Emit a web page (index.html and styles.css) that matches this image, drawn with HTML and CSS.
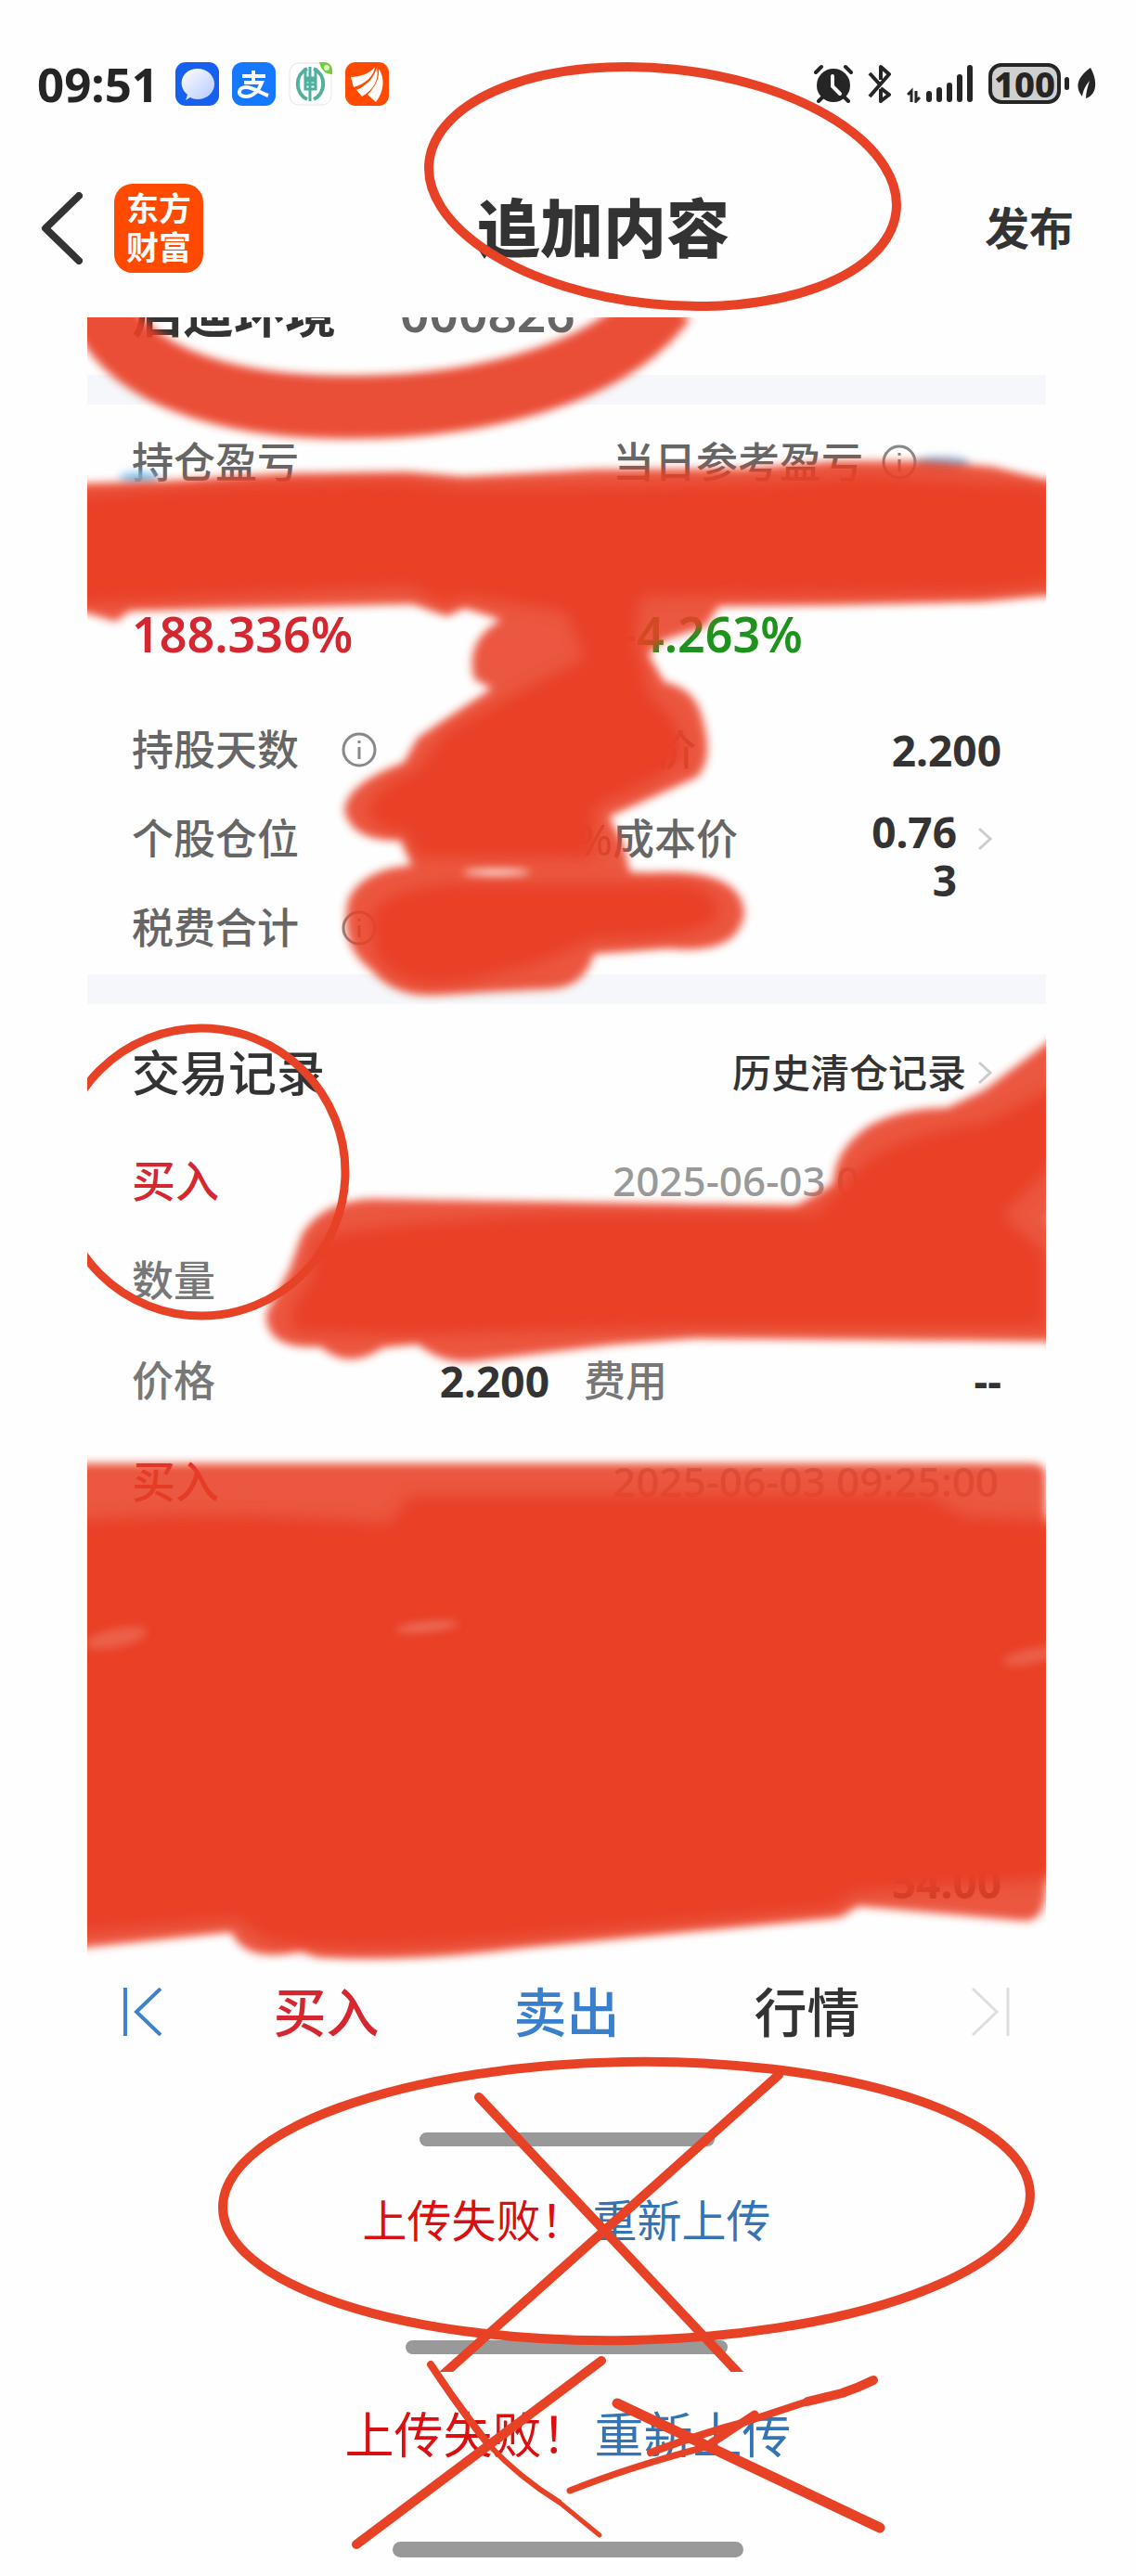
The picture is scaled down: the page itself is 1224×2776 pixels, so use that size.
FILE: index.html
```html
<!DOCTYPE html>
<html lang="zh-CN">
<head>
    <meta charset="UTF-8">
    <meta name="viewport" content="width=device-width, initial-scale=1.0">
    <title>追加内容</title>
    <link rel="stylesheet" href="styles.css">
</head>
<body>
<div class="page">
    <div class="status-bar">
        <span class="clock">09:51</span>
        <div class="app-icons">
            <svg class="app-icon" viewBox="0 0 47 47">
                <defs>
                    <linearGradient id="bubble" x1="0" y1="0" x2="1" y2="1">
                        <stop offset="0" stop-color="#ffffff"/>
                        <stop offset="1" stop-color="#b4c8ff"/>
                    </linearGradient>
                </defs>
                <rect width="47" height="47" rx="11" fill="#1660f0"/>
                <path d="M24 7a17.500 16 0 0 1 0 33c-3 0-6-1-8-2l-5 3 2-6C1 25 7 7 24 7z" fill="url(#bubble)"/>
            </svg>
            <svg class="app-icon" viewBox="0 0 47 47">
                <rect width="47" height="47" rx="11" fill="#1677ff"/>
                <path d="M11 15h25M23 9v13M13 22h19c-3 8-9 15-17 15-10 0-9-10 0-10 8 0 15 6 24 9" fill="none" stroke="#fff" stroke-width="4"/>
            </svg>
            <svg class="app-icon" viewBox="0 0 47 47">
                <rect x="1" y="1" width="45" height="45" rx="10" fill="#fff" stroke="#e6e6e6"/>
                <path d="M20 7A17 18 0 0 0 20 40M27 7A17 18 0 0 1 27 40" fill="none" stroke="#4fb0a0" stroke-width="4"/>
                <path d="M23 5v37M18 6v11h11V6M18 20h11v9H18zM18 24h11" fill="none" stroke="#4fb0a0" stroke-width="3"/>
                <path d="M33 0h5c6 0 9 4 9 9v4c-8 0-12-5-14-13z" fill="#73cc3d"/>
                <circle cx="41" cy="6" r="3" fill="#d9f5c4"/>
            </svg>
            <svg class="app-icon" viewBox="0 0 47 47">
                <rect width="47" height="47" rx="11" fill="#ff4a00"/>
                <path d="M6 16C16 16 27 12 32 5 31 15 21 24 9 27zM12 30C24 25 31 16 34 6c3 13-4 24-16 31zM24 35C32 27 37 18 36 7c7 10 6 24-3 36z" fill="#fff"/>
            </svg>
        </div>
        <div class="system-icons">
            <svg width="42" height="42" viewBox="0 0 42 42">
                <circle cx="21" cy="23" r="18" fill="#252525"/>
                <path d="M2 9l6-6M40 9l-6-6M9 36l-4 4M33 36l4 4" stroke="#252525" stroke-width="4" stroke-linecap="round"/>
                <path d="M20 13v11l8 8" fill="none" stroke="#fff" stroke-width="4" stroke-linecap="round"/>
            </svg>
            <svg width="26" height="42" viewBox="0 0 26 42">
                <path d="M2 10l10 11M2 35l21-24-9-8v14M14 26l9 7-9 7V27" fill="none" stroke="#252525" stroke-width="4" stroke-linejoin="round"/>
            </svg>
            <svg width="72" height="42" viewBox="0 0 72 42">
                <path d="M5 41V29l-4 4M10 29v11l4-4" fill="none" stroke="#252525" stroke-width="3"/>
                <path d="M24 32v6M35 28v10M46 23v15M57 14v24M68 4v34" stroke="#252525" stroke-width="6" stroke-linecap="round"/>
            </svg>
            <span class="battery">100</span>
            <svg width="20" height="34" viewBox="0 0 20 34">
                <path d="M14 0c8 14 7 29-5 33 0-6 2-13 4-19-5 6-7 11-8 17C-4 20 1 9 14 0z" fill="#252525"/>
            </svg>
        </div>
    </div>

    <header class="header">
        <button type="button" class="back-btn" aria-label="返回">
            <svg width="45" height="78" viewBox="0 0 45 78">
                <path d="M41 4L5 39l36 35" fill="none" stroke="#333" stroke-width="8" stroke-linecap="round" stroke-linejoin="round"/>
            </svg>
        </button>
        <div class="logo">东方<br>财富</div>
        <h1 class="title">追加内容</h1>
        <button type="button" class="publish-btn">发布</button>
    </header>

    <main>
        <section class="photo">
            <div class="stock">
                <span class="stock-name">启迪环境</span>
                <span class="stock-code">000826</span>
            </div>
            <div class="strip"></div>

            <div class="profit">
                <div class="profit-item">
                    <span class="label">持仓盈亏</span>
                    <span class="percent up">188.336%</span>
                </div>
                <div class="profit-item">
                    <span class="label">当日参考盈亏
                        <svg class="info" viewBox="0 0 38 38"><circle cx="19" cy="19" r="17"/><path d="M19 9v3M19 16v13"/></svg>
                    </span>
                    <span class="percent down">–4.263%</span>
                </div>
            </div>

            <div class="details">
                <div class="detail">
                    <span class="label">持股天数</span>
                    <svg class="info" viewBox="0 0 38 38"><circle cx="19" cy="19" r="17"/><path d="M19 9v3M19 16v13"/></svg>
                </div>
                <div class="detail">
                    <span class="label">现价</span>
                    <b class="value">2.200</b>
                </div>
                <div class="detail">
                    <span class="label">个股仓位</span>
                    <span class="value unit">%</span>
                </div>
                <div class="detail">
                    <span class="label">成本价</span>
                    <b class="value cost">0.763</b>
                    <svg class="arrow" viewBox="0 0 16 26"><path d="M2 2l12 11L2 24"/></svg>
                </div>
                <div class="detail">
                    <span class="label">税费合计</span>
                    <svg class="info" viewBox="0 0 38 38"><circle cx="19" cy="19" r="17"/><path d="M19 9v3M19 16v13"/></svg>
                </div>
            </div>
            <div class="strip"></div>

            <div class="records-head">
                <h2>交易记录</h2>
                <a href="#" class="history">历史清仓记录
                    <svg class="arrow" viewBox="0 0 16 26"><path d="M2 2l12 11L2 24"/></svg>
                </a>
            </div>
            <div class="record">
                <div class="record-row">
                    <span class="side">买入</span>
                    <span class="time">2025-06-03 0</span>
                </div>
                <div class="record-row">
                    <span class="cell"><span class="label">数量</span></span>
                </div>
                <div class="record-row">
                    <span class="cell"><span class="label">价格</span><b class="value">2.200</b></span>
                    <span class="cell"><span class="label">费用</span><b class="value">--</b></span>
                </div>
            </div>
            <div class="record">
                <div class="record-row">
                    <span class="side">买入</span>
                    <span class="time">2025-06-03 09:25:00</span>
                </div>
                <div class="record-row"></div>
                <div class="record-row"></div>
            </div>
            <div class="record">
                <div class="record-row"></div>
                <div class="record-row">
                    <span class="cell"></span>
                    <span class="cell"><b class="value">54.00</b></span>
                </div>
            </div>

            <nav class="tabs">
                <a href="#" aria-label="上一只">
                    <svg width="44" height="52" viewBox="0 0 44 52"><path d="M3 0v52M41 1L15 26l26 25" fill="none" stroke="#3f82c6" stroke-width="4"/></svg>
                </a>
                <a href="#" class="tab buy">买入</a>
                <a href="#" class="tab sell">卖出</a>
                <a href="#" class="tab">行情</a>
                <a href="#" aria-label="下一只">
                    <svg width="44" height="52" viewBox="0 0 44 52"><path d="M41 0v52M3 1l26 25L3 51" fill="none" stroke="#dedede" stroke-width="3"/></svg>
                </a>
            </nav>
            <div class="home-bar small"></div>
            <p class="upload inner">
                <span class="failed">上传失败！</span>
                <a href="#" class="retry">重新上传</a>
            </p>
            <div class="home-bar medium"></div>

            <!-- brush marks over the photo -->
            <svg class="marks" viewBox="94 342 1033 2214" preserveAspectRatio="none">
                <defs>
                    <filter id="soft" filterUnits="userSpaceOnUse" x="34" y="300" width="1153" height="1900">
                        <feGaussianBlur stdDeviation="5"/>
                    </filter>
                    <filter id="softer" filterUnits="userSpaceOnUse" x="34" y="300" width="1153" height="1900">
                        <feGaussianBlur stdDeviation="8"/>
                    </filter>
                </defs>
                <ellipse cx="150" cy="515" rx="22" ry="6" fill="#7cc4f0" filter="url(#soft)"/>
                <ellipse cx="1015" cy="500" rx="30" ry="8" fill="#8fb8dc" filter="url(#soft)"/>
                <path d="M104 315C120 402 240 439 375 439C520 439 660 402 716 324" fill="none" stroke="#e93f28" stroke-width="68" opacity=".92" filter="url(#soft)"/>
                <g fill="#e93f28" opacity=".88" filter="url(#soft)">
                    <path d="M60 522L180 519L300 511L440 509L500 514L640 506L800 505L900 497L1000 497L1070 503L1127 518H1180V642H1127L1060 648L900 652L775 653L760 675L715 690L698 705L716 735Q750 742 757 775Q770 820 750 838L656 880L672 910L680 945Q600 960 520 938L445 935L432 905Q380 908 371 874Q372 845 435 822L450 795L530 742L511 732Q500 690 540 668L500 655L482 664L445 651L140 658L125 670L60 650Z"/>
                    <path d="M375 970Q390 935 450 932L700 941Q800 935 802 985Q795 1030 720 1022L640 1028Q630 1065 590 1066L470 1072Q425 1075 400 1045Q365 1020 375 970Z"/>
                    <path d="M325 1331Q345 1295 400 1292L857 1300L898 1276Q898 1240 935 1214Q970 1194 1020 1194L1060 1175L1180 1085V1285L1125 1315L1180 1312V1446L749 1442L660 1449L510 1467Q475 1470 450 1448L413 1452Q375 1478 345 1451Q285 1455 287 1415L312 1368Z"/>
                    <path d="M60 1577H1110Q1127 1577 1127 1590V2040Q1124 2072 1102 2070L925 2054L905 2066L562 2099Q440 2115 342 2109L324 2102Q265 2117 249 2082L60 2102Z"/>
                </g>
                <g fill="#e93f28" filter="url(#softer)">
                    <path d="M60 536L250 522L430 518L500 526L660 524L850 519L930 512L1060 520L1180 527V622L1060 638L900 640L690 643L684 690L700 750Q740 780 735 820L700 842L640 870L640 925L450 924L438 896Q400 896 396 872Q404 848 450 830L480 790L560 745L630 710L610 660L500 642L480 652L440 632L60 652Z"/>
                    <path d="M400 985Q410 962 480 952L720 952Q775 952 775 985Q765 1012 640 1012L580 1038L500 1058Q435 1070 405 1030Z"/>
                    <path d="M340 1338Q370 1320 600 1308L880 1308L935 1250Q980 1220 1060 1210L1160 1160V1230L1080 1310L1127 1350V1430L749 1430L450 1439L320 1436Q302 1418 335 1380Z"/>
                    <path d="M60 1640Q240 1625 420 1642L440 1612H1000L1040 1634L1180 1640V2022L920 2040L900 2056L500 2094Q340 2106 285 2090L255 2068L60 2085Z"/>
                </g>
                <g fill="#f09080" filter="url(#soft)">
                    <ellipse cx="460" cy="1753" rx="34" ry="5" opacity=".6" transform="rotate(-6 460 1753)"/>
                    <ellipse cx="125" cy="1765" rx="34" ry="10" opacity=".4" transform="rotate(-12 125 1765)"/>
                    <ellipse cx="1110" cy="1785" rx="30" ry="8" opacity=".4" transform="rotate(-12 1110 1785)"/>
                    <ellipse cx="535" cy="940" rx="36" ry="3" fill="#fff"/>
                </g>
                <g fill="none" stroke="#e74126" stroke-linecap="round">
                    <ellipse cx="217" cy="1263" rx="155" ry="155" stroke-width="9"/>
                    <ellipse cx="675" cy="2372" rx="435" ry="150" stroke-width="10" transform="rotate(-1 675 2372)"/>
                    <path d="M516 2260L800 2562M839 2236L474 2562" stroke-width="10"/>
                </g>
            </svg>
        </section>

        <p class="upload">
            <span class="failed">上传失败！</span>
            <a href="#" class="retry">重新上传</a>
        </p>
        <div class="home-bar large"></div>
    </main>

    <!-- pen marks over the whole page -->
    <svg class="marks" viewBox="0 0 1224 2776" preserveAspectRatio="none">
        <g fill="none" stroke="#e74126" stroke-width="10" stroke-linecap="round" stroke-linejoin="round">
            <ellipse cx="714" cy="201" rx="253" ry="127" transform="rotate(6 714 201)"/>
            <path d="M648 2544L384 2742"/>
            <path d="M665 2590L948 2724" stroke-width="11"/>
            <path d="M464 2548Q495 2595 527 2635" stroke-width="8"/>
            <path d="M527 2635Q560 2670 602 2696" stroke-width="6"/>
            <path d="M602 2696L646 2732" stroke-width="5"/>
            <path d="M614 2684Q680 2658 760 2637" stroke-width="7"/>
            <path d="M760 2637L813 2602" stroke-width="9"/>
            <path d="M701 2643Q760 2621 800 2611L870 2588" stroke-width="8"/>
            <path d="M870 2588L907 2579Q925 2573 941 2565" stroke-width="10"/>
        </g>
    </svg>
</div>
</body>
</html>
```
FILE: styles.css
```css
body {
    margin: 0;
    padding: 0;
    background-color: #fefefe;
    color: #333;
    font-family: "Noto Sans", "Noto Sans CJK SC", sans-serif;
}
button {
    padding: 0;
    border: none;
    background: none;
    color: inherit;
    font-family: inherit;
}
a {
    color: inherit;
    text-decoration: none;
}
svg {
    display: block;
    flex-shrink: 0;
}
.page {
    position: relative;
    overflow: hidden;
    padding-bottom: 20px;
}
.marks {
    position: absolute;
    top: 0;
    left: 0;
    width: 100%;
    height: 100%;
    pointer-events: none;
}

/* status bar */
.status-bar {
    display: flex;
    align-items: center;
    height: 60px;
    padding: 60px 43px 30px 40px;
    color: #252525;
}
.clock {
    font-size: 51px;
    font-weight: 700;
    line-height: 60px;
}
.app-icons {
    display: flex;
    gap: 14px;
    margin-left: 18px;
}
.app-icon {
    width: 47px;
    height: 47px;
}
.system-icons {
    display: flex;
    align-items: center;
    gap: 16px;
    margin-left: auto;
}
.battery {
    position: relative;
    box-sizing: border-box;
    width: 78px;
    margin-right: 2px;
    border: 4px solid #252525;
    border-radius: 14px;
    background: #d0d0d0;
    font-size: 38px;
    font-weight: 800;
    line-height: 36px;
    text-align: center;
}
.battery::after {
    content: "";
    position: absolute;
    top: 11px;
    right: -13px;
    width: 5px;
    height: 14px;
    border-radius: 3px;
    background: #252525;
}

/* header */
.header {
    display: flex;
    align-items: center;
    height: 192px;
    padding: 0 67px 0 44px;
}
.logo {
    width: 96px;
    margin-left: 34px;
    padding: 6px 0;
    border-radius: 20px;
    background: #ff4a00;
    color: #fff;
    font-size: 35px;
    font-weight: 700;
    line-height: 42px;
    text-align: center;
}
.title {
    flex: 1;
    margin: 0;
    padding-left: 20px;
    font-size: 68px;
    font-weight: 900;
    line-height: 80px;
    text-align: center;
}
.publish-btn {
    font-size: 48px;
    font-weight: 700;
    line-height: 60px;
}

/* uploaded photo */
.photo {
    position: relative;
    overflow: hidden;
    margin: 0 97px 0 94px;
    padding-bottom: 19px;
}
.strip {
    height: 32px;
    background: #f5f7fa;
}
.label {
    display: flex;
    align-items: center;
    color: #666;
    font-size: 45px;
    font-weight: 500;
    line-height: 52px;
}
.value {
    margin-left: auto;
    font-size: 46px;
    line-height: 52px;
}
.info {
    width: 38px;
    height: 38px;
    fill: none;
    stroke: #888;
    stroke-width: 3;
}
.arrow {
    width: 16px;
    height: 26px;
    fill: none;
    stroke: #ccc;
    stroke-width: 3;
}
.stock {
    display: flex;
    gap: 69px;
    margin-top: -35px;
    padding: 0 48px 37px;
    font-size: 55px;
    line-height: 60px;
}
.stock-name {
    font-weight: 700;
}
.stock-code {
    color: #666;
    font-weight: 600;
}
.profit {
    display: grid;
    grid-template-columns: 1fr 419px;
    padding: 36px 48px 47px;
}
.profit-item {
    display: flex;
    flex-direction: column;
    gap: 129px;
}
.profit .info {
    margin-left: 20px;
}
.percent {
    font-size: 52px;
    font-weight: 600;
    line-height: 60px;
}
.up {
    color: #d4272f;
}
.down {
    color: #1d931d;
}
.details {
    display: grid;
    grid-template-columns: 1fr 419px;
    grid-auto-rows: 96px;
    padding: 0 48px 2px;
}
.detail {
    display: flex;
    align-items: center;
}
.detail .info {
    margin-left: 46px;
}
.unit {
    color: #666;
}
.cost {
    align-self: flex-start;
    width: 96px;
    padding-top: 14px;
    text-align: right;
    word-break: break-all;
}
.detail .arrow {
    margin: 0 10px 0 22px;
}

/* trade records */
.records-head {
    display: flex;
    align-items: center;
    justify-content: space-between;
    height: 124px;
    padding: 12px 58px 0 48px;
}
.records-head h2 {
    margin: 0;
    font-size: 52px;
    font-weight: 500;
    line-height: 60px;
}
.history {
    display: flex;
    align-items: center;
    gap: 12px;
    font-size: 42px;
    font-weight: 500;
    line-height: 52px;
}
.record {
    padding: 0 48px;
}
.record-row {
    display: flex;
    align-items: center;
    justify-content: space-between;
    gap: 37px;
    height: 108px;
}
.cell {
    display: flex;
    flex: 1;
    align-items: center;
}
.record .label {
    color: #777;
}
.side {
    color: #d4272f;
    font-size: 47px;
    font-weight: 500;
    line-height: 52px;
}
.time {
    width: 419px;
    color: #999;
    font-size: 44px;
    font-weight: 500;
    line-height: 52px;
    white-space: nowrap;
}

/* bottom tabs */
.tabs {
    display: flex;
    align-items: center;
    height: 172px;
    padding: 0 38px;
}
.tab {
    flex: 1;
    font-size: 57px;
    font-weight: 500;
    line-height: 80px;
    text-align: center;
}
.tabs a:first-child {
    margin-right: 46px;
}
.tabs a:last-child {
    margin-left: 46px;
}
.buy {
    color: #d4272f;
}
.sell {
    color: #3a7fcc;
}

/* upload state */
.home-bar {
    height: 15px;
    margin: 0 auto;
    border-radius: 9px;
    background: #999;
}
.small {
    width: 318px;
    margin-top: 44px;
}
.medium {
    width: 347px;
}
.large {
    width: 378px;
    height: 17px;
}
.upload {
    display: flex;
    justify-content: center;
    gap: 4px;
    margin: 38px 0 85px;
    font-size: 53px;
    line-height: 60px;
}
.inner {
    gap: 8px;
    margin: 50px 0 99px;
    font-size: 48px;
}
.failed {
    color: #d90f12;
}
.retry {
    color: #3474b4;
}
```
